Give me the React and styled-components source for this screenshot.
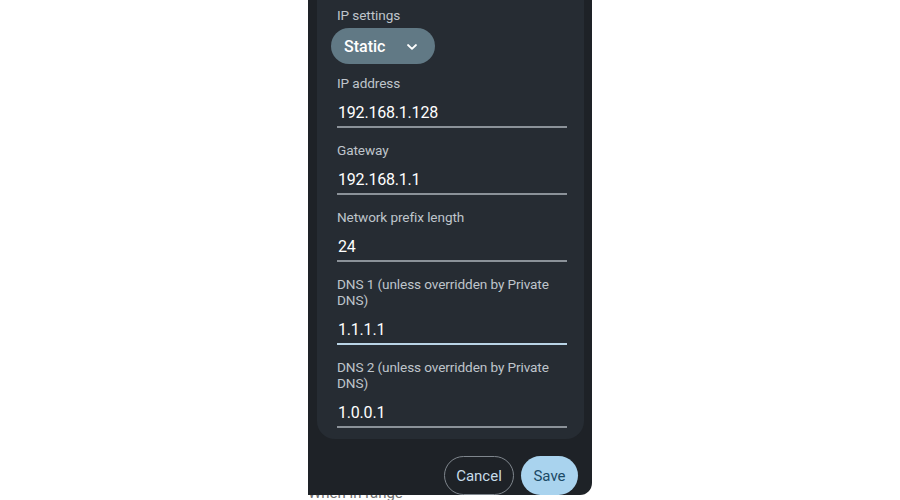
import React from "react";
import styled, { createGlobalStyle } from "styled-components";

const GlobalStyle = createGlobalStyle`
  html, body {
    margin: 0;
    padding: 0;
    background: #ffffff;
    font-family: Roboto, "Noto Sans", Arial, sans-serif;
  }
`;

const fields = [
  { id: 1, label: "IP address", value: "192.168.1.128" },
  { id: 2, label: "Gateway", value: "192.168.1.1" },
  { id: 3, label: "Network prefix length", value: "24" },
  { id: 4, label: "DNS 1 (unless overridden by Private DNS)", value: "1.1.1.1", focused: true },
  { id: 5, label: "DNS 2 (unless overridden by Private DNS)", value: "1.0.0.1" },
];

const Chevron = () => (
  <svg width="12" height="8" viewBox="0 0 12 8" fill="none">
    <path d="M2 2 L6 5.8 L10 2" stroke="#ffffff" strokeWidth="1.8" strokeLinecap="round" strokeLinejoin="round" />
  </svg>
);

export default function App() {
  return (
    <>
      <GlobalStyle />
      <Page>
        <Dialog>
          <Card>
            <Label>IP settings</Label>
            <Dropdown>
              <span>Static</span>
              <Chevron />
            </Dropdown>
            {fields.map((f) => (
              <Field key={f.id}>
                <Label>{f.label}</Label>
                <Value $focused={f.focused}>{f.value}</Value>
              </Field>
            ))}
          </Card>
          <Divider />
          <Actions>
            <OutlineButton>Cancel</OutlineButton>
            <FilledButton>Save</FilledButton>
          </Actions>
        </Dialog>
        <Behind>
          <BehindText>When in range</BehindText>
        </Behind>
      </Page>
    </>
  );
}

const Page = styled.div`
  width: 900px;
  height: 500px;
  display: flex;
  flex-direction: column;
  align-items: center;
  overflow: hidden;
`;

const Dialog = styled.div`
  width: 284px;
  height: 495px;
  box-sizing: border-box;
  padding: 0 8px 0 9px;
  background: #1e2227;
  border-bottom-right-radius: 12px;
  display: flex;
  flex-direction: column;
`;

const Card = styled.div`
  background: #262c33;
  border-radius: 0 0 18px 18px;
  padding: 7px 17px 11px 20px;
  display: flex;
  flex-direction: column;
`;

const Label = styled.div`
  max-width: 222px;
  font-size: 13.6px;
  line-height: 16px;
  letter-spacing: -0.1px;
  color: #bfc5cb;
`;

const Dropdown = styled.div`
  margin: 5px 0 0 -6px;
  width: 104px;
  height: 36px;
  box-sizing: border-box;
  border-radius: 18px;
  background: #617985;
  display: flex;
  align-items: center;
  justify-content: space-between;
  padding: 0 17px 0 13px;
  color: #ffffff;
  font-size: 16px;
  font-weight: 500;

  svg {
    margin-top: 1px;
  }
`;

const Field = styled.div`
  margin-top: 11px;
  display: flex;
  flex-direction: column;

  & + & {
    margin-top: 14px;
  }
`;

const Value = styled.div`
  padding: 10px 0 1px 1px;
  font-size: 16px;
  line-height: 24px;
  font-weight: 400;
  letter-spacing: -0.2px;
  color: #ffffff;
  border-bottom: 2px solid ${(p) => (p.$focused ? "#b9d4e6" : "#8b9299")};
`;

const Divider = styled.div`
  margin-top: 8px;
  height: 1px;
  background: #3a4047;
`;

const Actions = styled.div`
  display: flex;
  justify-content: flex-end;
  gap: 7px;
  padding: 9px 6px 0 0;
`;

const ButtonBase = styled.button`
  height: 39px;
  border-radius: 20px;
  font-family: Roboto, "Noto Sans", Arial, sans-serif;
  font-size: 15px;
  font-weight: 400;
  cursor: pointer;
  box-sizing: border-box;
`;

const OutlineButton = styled(ButtonBase)`
  width: 70px;
  background: transparent;
  border: 1px solid #7f868d;
  color: #c6dcea;
`;

const FilledButton = styled(ButtonBase)`
  width: 57px;
  border: none;
  background: #a9d3ee;
  color: #1b4a66;
`;

const Behind = styled.div`
  width: 284px;
  height: 5px;
  overflow: hidden;
`;

const BehindText = styled.div`
  margin-top: -10px;
  font-size: 15px;
  line-height: 16px;
  color: #6e6e6e;
`;
